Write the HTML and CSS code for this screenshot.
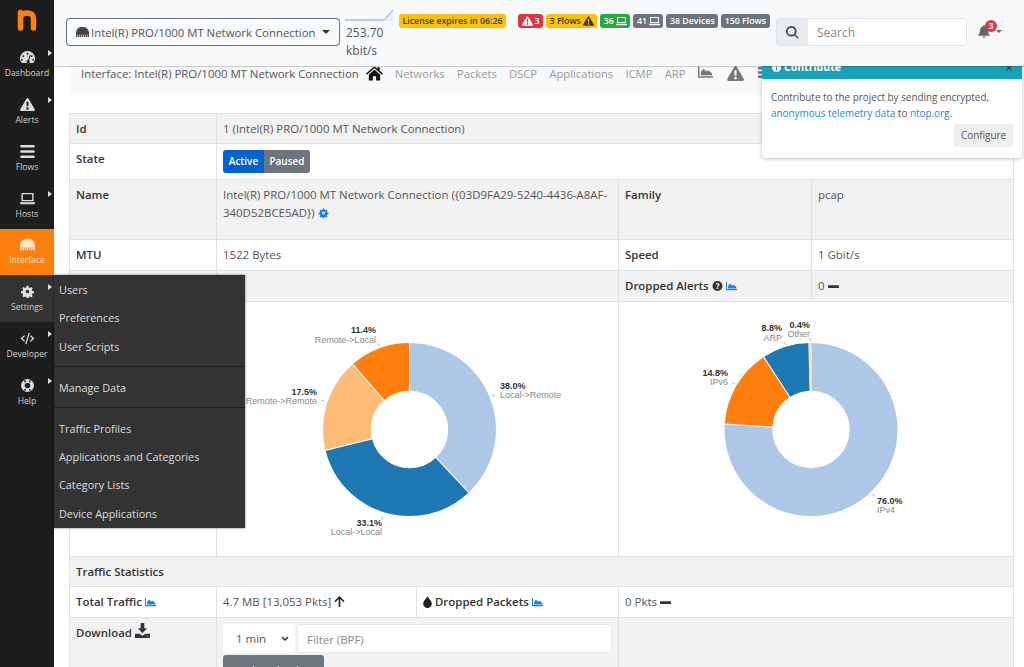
FILE: index.html
```html
<!DOCTYPE html>
<html lang="en">
<head>
<meta charset="utf-8">
<title>ntopng Interface</title>
<link rel="stylesheet" href="styles.css">
</head>
<body>
<svg class="defs" width="0" height="0" aria-hidden="true">
  <symbol id="i-eth" viewBox="0 0 16 12"><path d="M0 12V7a7 6.500 0 0 1 16 0v5h-1.700V9h-.8v3h-1.700V9h-.8v3H9.300V9h-.8v3H7.500V9h-.8v3H5V9h-.8v3H2.500V9h-.8v3z"/></symbol>
  <symbol id="i-gauge" viewBox="0 0 16 14"><path fill-rule="evenodd" d="M8 0a8 8 0 0 0-6.800 12.200q.4.800 1.300.8h11q.9 0 1.300-.8A8 8 0 0 0 8 0zM8 2a1 1 0 1 1 0 2 1 1 0 0 1 0-2zM3.500 4.500a1 1 0 1 1 0 2 1 1 0 0 1 0-2zM12.500 4.500a1 1 0 1 1 0 2 1 1 0 0 1 0-2zM2 8.500a1 1 0 1 1 0 2 1 1 0 0 1 0-2zM14 8.500a1 1 0 1 1 0 2 1 1 0 0 1 0-2zM10.500 4.300l.9.3-1.700 5.300a1.800 1.800 0 1 1-1-.3z"/></symbol>
  <symbol id="i-warn" viewBox="0 0 16 14"><path fill-rule="evenodd" d="M8 0q.7 0 1.100.7l6.700 11.500q.5 1.500-1.100 1.800H1.300Q-.3 13.700.2 12.200L6.900.7Q7.300 0 8 0zM6.900 4l.2 5h1.800l.2-5zM8 10a1.300 1.300 0 1 0 0 2.600A1.300 1.300 0 0 0 8 10z"/></symbol>
  <symbol id="i-bars" viewBox="0 0 14 13"><path d="M1 0h12a1 1 0 0 1 0 2.600H1A1 1 0 0 1 1 0zM1 5.200h12a1 1 0 0 1 0 2.600H1a1 1 0 0 1 0-2.600zM1 10.400h12a1 1 0 0 1 0 2.600H1a1 1 0 0 1 0-2.600z"/></symbol>
  <symbol id="i-laptop" viewBox="0 0 16 12"><path fill-rule="evenodd" d="M2.500 0h11A1 1 0 0 1 14.500 1v8h-13V1a1 1 0 0 1 1-1zM3 1.500V7.500h10v-6zM0 10h16v1a1 1 0 0 1-1 1H1a1 1 0 0 1-1-1z"/></symbol>
  <symbol id="i-cog" viewBox="0 0 14 14"><path fill-rule="evenodd" d="M5.800 0h2.400l.4 2 1.400.6 1.700-1.100 1.700 1.700-1.100 1.700.6 1.400 2 .4v2.400l-2 .4-.6 1.400 1.100 1.700-1.700 1.700-1.700-1.100-1.400.6-.4 2H5.800l-.4-2-1.400-.6-1.700 1.100L.6 12.600l1.100-1.700-.6-1.400-2-.4V6.700l2-.4.6-1.400L.6 3.200 2.300 1.500 4 2.600l1.400-.6zM7 4.800a2.200 2.200 0 1 0 0 4.400 2.200 2.200 0 0 0 0-4.400z" transform="translate(.8 .8) scale(.885)"/></symbol>
  <symbol id="i-code" viewBox="0 0 18 14"><path d="M10.200 0l1.500.4L7.800 14l-1.500-.4zM5 3l1.100 1.100L3 7l3.100 2.900L5 11 .6 7zM13 3l4.400 4L13 11l-1.100-1.100L15 7l-3.100-2.900z"/></symbol>
  <symbol id="i-ring" viewBox="0 0 14 14"><path fill-rule="evenodd" d="M7 0a7 7 0 1 0 0 14A7 7 0 0 0 7 0zM7 4a3 3 0 1 1 0 6 3 3 0 0 1 0-6zM3 1.900A6 6 0 0 1 5 1.400l.4 1.800a4 4 0 0 0-1.200.7zM11 1.900l-1.200 2a4 4 0 0 0-1.200-.7L9 1.400a6 6 0 0 1 2 .5zM3 12.100l1.200-2a4 4 0 0 0 1.200.7L5 12.600a6 6 0 0 1-2-.5zM11 12.100a6 6 0 0 1-2 .5l-.4-1.800a4 4 0 0 0 1.200-.7z"/></symbol>
  <symbol id="i-home" viewBox="0 0 18 15"><path d="M9 0l3 2.500V1h2.500v3.600L18 7.500l-1 1.200L9 2 1 8.700 0 7.500zM9 3.500l6 5V14a1 1 0 0 1-1 1h-3.300v-4.500H7.300V15H4a1 1 0 0 1-1-1V8.500z"/></symbol>
  <symbol id="i-area" viewBox="0 0 16 12"><path d="M0 0h1.500v10.500H16V12H0zM3 9.500V6l3-3.500 3 3 2-1.500 4 3.500v2z"/></symbol>
  <symbol id="i-list" viewBox="0 0 14 13"><path d="M0 0h14v3H0zM0 5h14v3H0zM0 10h14v3H0z"/></symbol>
  <symbol id="i-search" viewBox="0 0 14 14"><path fill-rule="evenodd" d="M5.700 0a5.700 5.700 0 0 1 4.500 9.200l3.500 3.500-1 1-3.500-3.500A5.700 5.700 0 1 1 5.700 0zM5.700 1.900a3.800 3.800 0 1 0 0 7.600 3.800 3.800 0 0 0 0-7.600z"/></symbol>
  <symbol id="i-bell" viewBox="0 0 12 14"><path d="M6 0a1 1 0 0 1 1 1v.6A4 4 0 0 1 10.200 5.500c0 3.500 1.800 4.700 1.800 5.500v.5H0V11c0-.8 1.800-2 1.800-5.500A4 4 0 0 1 5 1.600V1a1 1 0 0 1 1-1zM4.400 12.300h3.200a1.600 1.600 0 0 1-3.200 0z"/></symbol>
  <symbol id="i-info" viewBox="0 0 12 12"><path fill-rule="evenodd" d="M6 0a6 6 0 1 0 0 12A6 6 0 0 0 6 0zM6 2.300a1 1 0 1 1 0 2 1 1 0 0 1 0-2zM4.800 5h2v4h.6v1H4.700V9h.7V6h-.6z"/></symbol>
  <symbol id="i-help" viewBox="0 0 12 12"><path fill-rule="evenodd" d="M6 0a6 6 0 1 0 0 12A6 6 0 0 0 6 0zM6 2.300c1.500 0 2.500.9 2.500 2 0 1.600-1.700 1.600-1.700 2.600H5.200c0-1.800 1.600-1.800 1.600-2.600 0-.4-.3-.7-.8-.7-.5 0-.9.3-1.200.8l-1-.7C4.300 2.800 5 2.300 6 2.300zM5.100 7.700h1.800v1.800H5.100z"/></symbol>
  <symbol id="i-drop" viewBox="0 0 10 14"><path d="M5 0c.8 3 5 5 5 9a5 5 0 0 1-10 0c0-4 4.200-6 5-9z"/></symbol>
  <symbol id="i-up" viewBox="0 0 12 12"><path d="M6 0l5.500 5.500-1.200 1.200L6.900 3.300V12H5.100V3.300L1.700 6.700.5 5.500z"/></symbol>
  <symbol id="i-minus" viewBox="0 0 12 3"><rect width="12" height="3" rx=".6"/></symbol>
  <symbol id="i-dl" viewBox="0 0 14 14"><path fill-rule="evenodd" d="M5.300 0h3.400v5h2.600L7 9.500 2.700 5h2.600zM0 10h4.300L7 12l2.700-2H14v4H0zM11.500 11.600a.5.500 0 1 0 0 1 .5.500 0 0 0 0-1z"/></symbol>
</svg>

<div class="app">
  <aside class="sidebar">
    <div class="logo"><svg class="logo-mark" viewBox="0 0 54 41" aria-label="ntopng"><path d="M20.500 12.500V28M20.500 17Q22.500 13 27 13Q33.500 13 33.500 19V28"/></svg></div>
    <nav class="side-nav">
      <a class="side-item has-sub"><svg class="si"><use href="#i-gauge"/></svg><span>Dashboard</span></a>
      <a class="side-item has-sub"><svg class="si"><use href="#i-warn"/></svg><span>Alerts</span></a>
      <a class="side-item"><svg class="si"><use href="#i-bars"/></svg><span>Flows</span></a>
      <a class="side-item has-sub"><svg class="si"><use href="#i-laptop"/></svg><span>Hosts</span></a>
      <a class="side-item is-active"><svg class="si"><use href="#i-eth"/></svg><span>Interface</span></a>
      <a class="side-item has-sub is-open"><svg class="si"><use href="#i-cog"/></svg><span>Settings</span></a>
      <a class="side-item has-sub"><svg class="si"><use href="#i-code"/></svg><span>Developer</span></a>
      <a class="side-item has-sub"><svg class="si"><use href="#i-ring"/></svg><span>Help</span></a>
    </nav>
  </aside>

  <div class="column">
    <header class="navbar">
      <button class="iface-select"><svg class="ic-eth"><use href="#i-eth"/></svg><span>Intel(R) PRO/1000 MT Network Connection</span><i class="caret"></i></button>
      <div class="rate">
        <svg class="spark" viewBox="0 0 48 12"><path class="spark-fill" d="M0 11h39l9-10v11H0z"/><path class="spark-line" d="M0 11h39l9-10"/></svg>
        <div class="rate-text">253.70 kbit/s</div>
      </div>
      <div class="badges">
        <span class="badge b-yellow b-license">License expires in 06:26</span>
        <span class="badge b-red"><svg class="bi"><use href="#i-warn"/></svg>3</span>
        <span class="badge b-yellow">3 Flows<svg class="bi"><use href="#i-warn"/></svg></span>
        <span class="badge b-green">36<svg class="bi"><use href="#i-laptop"/></svg></span>
        <span class="badge b-grey">41<svg class="bi"><use href="#i-laptop"/></svg></span>
        <span class="badge b-grey">38 Devices</span>
        <span class="badge b-grey">150 Flows</span>
      </div>
      <div class="search">
        <span class="search-addon"><svg class="ic-search"><use href="#i-search"/></svg></span>
        <span class="search-field">Search</span>
      </div>
      <div class="bell">
        <svg class="ic-bell"><use href="#i-bell"/></svg>
        <span class="bell-count">3</span>
        <i class="caret caret-small"></i>
      </div>
    </header>

    <main class="content">
      <div class="subnav">
        <span class="sub-title">Interface: Intel(R) PRO/1000 MT Network Connection</span>
        <svg class="ic-home"><use href="#i-home"/></svg>
        <a>Networks</a><a>Packets</a><a>DSCP</a><a>Applications</a><a>ICMP</a><a>ARP</a>
        <svg class="ic-area"><use href="#i-area"/></svg>
        <svg class="ic-warn"><use href="#i-warn"/></svg>
        <svg class="ic-list"><use href="#i-list"/></svg>
      </div>

      <table class="info">
        <colgroup><col class="c1"><col class="c2"><col class="c3"><col class="c4"><col class="c5"></colgroup>
        <tbody>
          <tr class="r-id odd"><th>Id</th><td colspan="4">1 (Intel(R) PRO/1000 MT Network Connection)</td></tr>
          <tr class="r-state"><th>State</th><td colspan="4"><span class="toggle"><span class="t-on">Active</span><span class="t-off">Paused</span></span></td></tr>
          <tr class="r-name odd"><th>Name</th><td colspan="2">Intel(R) PRO/1000 MT Network Connection ({03D9FA29-5240-4436-A8AF-340D52BCE5AD}) <svg class="ic-inline blue"><use href="#i-cog"/></svg></td><th>Family</th><td>pcap</td></tr>
          <tr class="r-row"><th>MTU</th><td colspan="2">1522 Bytes</td><th>Speed</th><td>1 Gbit/s</td></tr>
          <tr class="r-row odd"><th></th><td colspan="2"></td><th>Dropped Alerts <svg class="ic-inline dark"><use href="#i-help"/></svg> <svg class="ic-inline blue"><use href="#i-area"/></svg></th><td>0 <svg class="ic-minus"><use href="#i-minus"/></svg></td></tr>
          <tr class="r-chart">
            <th></th>
            <td colspan="2" class="chart-cell">
              <svg class="pie" viewBox="217 301 401 254">
                <g transform="translate(409.500 428.500) rotate(-90)" fill="none" stroke-width="47.800">
                  <circle r="62.600" pathLength="100" stroke="#aec7e8" stroke-dasharray="38 62"/>
                  <circle r="62.600" pathLength="100" stroke="#1f77b4" stroke-dasharray="33.100 66.900" stroke-dashoffset="-38"/>
                  <circle r="62.600" pathLength="100" stroke="#ffbb78" stroke-dasharray="17.500 82.500" stroke-dashoffset="-71.100"/>
                  <circle r="62.600" pathLength="100" stroke="#ff7f0e" stroke-dasharray="11.400 88.600" stroke-dashoffset="-88.600"/>
                </g>
                <g transform="translate(409.500 428.500)" class="seps">
                  <line y1="-38" y2="-87"/>
                  <line y1="-38" y2="-87" transform="rotate(136.800)"/>
                  <line y1="-38" y2="-87" transform="rotate(255.960)"/>
                  <line y1="-38" y2="-87" transform="rotate(318.960)"/>
                </g>
                <path class="lead" d="M492 395l3-1M379 345l-1-3M324 400l-3-1M383 516l-1 3"/>
                <text class="pct" x="376" y="332" text-anchor="end">11.4%</text>
                <text class="lbl" x="376" y="342" text-anchor="end">Remote-&gt;Local</text>
                <text class="pct" x="500" y="388">38.0%</text>
                <text class="lbl" x="500" y="397">Local-&gt;Remote</text>
                <text class="pct" x="317" y="394" text-anchor="end">17.5%</text>
                <text class="lbl" x="317" y="403" text-anchor="end">Remote-&gt;Remote</text>
                <text class="pct" x="382" y="525" text-anchor="end">33.1%</text>
                <text class="lbl" x="382" y="534" text-anchor="end">Local-&gt;Local</text>
              </svg>
            </td>
            <td colspan="2" class="chart-cell">
              <svg class="pie" viewBox="619 301 394 254">
                <g transform="translate(811 428.500) rotate(-90)" fill="none" stroke-width="47.800">
                  <circle r="62.600" pathLength="100" stroke="#aec7e8" stroke-dasharray="76 24"/>
                  <circle r="62.600" pathLength="100" stroke="#ff7f0e" stroke-dasharray="14.800 85.200" stroke-dashoffset="-76"/>
                  <circle r="62.600" pathLength="100" stroke="#1f77b4" stroke-dasharray="8.800 91.200" stroke-dashoffset="-90.800"/>
                  <circle r="62.600" pathLength="100" stroke="#ffbb78" stroke-dasharray="0.400 99.600" stroke-dashoffset="-99.600"/>
                </g>
                <g transform="translate(811 428.500)" class="seps">
                  <line y1="-38" y2="-87"/>
                  <line y1="-38" y2="-87" transform="rotate(273.600)"/>
                  <line y1="-38" y2="-87" transform="rotate(326.880)"/>
                  <line y1="-38" y2="-87" transform="rotate(358.560)"/>
                </g>
                <path class="lead" d="M872 493l3 2M735 383l-3-2M786 344l-2-3M810 340l0-3"/>
                <text class="pct" x="877" y="503">76.0%</text>
                <text class="lbl" x="877" y="512">IPv4</text>
                <text class="pct" x="728" y="375" text-anchor="end">14.8%</text>
                <text class="lbl" x="728" y="384" text-anchor="end">IPv6</text>
                <text class="pct" x="782" y="330" text-anchor="end">8.8%</text>
                <text class="lbl" x="782" y="340" text-anchor="end">ARP</text>
                <text class="pct" x="810" y="327" text-anchor="end">0.4%</text>
                <text class="lbl" x="810" y="336" text-anchor="end">Other</text>
              </svg>
            </td>
          </tr>
          <tr class="r-id odd"><th colspan="5">Traffic Statistics</th></tr>
          <tr class="r-row"><th>Total Traffic <svg class="ic-inline blue"><use href="#i-area"/></svg></th><td>4.7 MB [13,053 Pkts] <svg class="ic-up"><use href="#i-up"/></svg></td><th><svg class="ic-drop"><use href="#i-drop"/></svg> Dropped Packets <svg class="ic-inline blue"><use href="#i-area"/></svg></th><td colspan="2">0 Pkts <svg class="ic-minus"><use href="#i-minus"/></svg></td></tr>
          <tr class="r-dl odd">
            <th>Download <svg class="ic-dl"><use href="#i-dl"/></svg></th>
            <td colspan="2">
              <div class="dl-form">
                <span class="dl-select">1 min<svg class="chev" viewBox="0 0 8 5"><path d="M1 1l3 3 3-3"/></svg></span>
                <span class="dl-filter">Filter (BPF)</span>
              </div>
              <button class="dl-btn">download</button>
            </td>
            <td colspan="2"></td>
          </tr>
        </tbody>
      </table>
    </main>
  </div>
</div>

<div class="menu">
  <a>Users</a><a>Preferences</a><a>User Scripts</a>
  <hr>
  <a>Manage Data</a>
  <hr class="hr-tight">
  <a>Traffic Profiles</a><a>Applications and Categories</a><a>Category Lists</a><a>Device Applications</a>
</div>

<div class="toast">
  <div class="toast-head"><svg class="ic-info"><use href="#i-info"/></svg><b>Contribute</b><span class="toast-x">×</span></div>
  <div class="toast-body">
    <p>Contribute to the project by sending encrypted, <a>anonymous telemetry data</a> to <a>ntop.org</a>.</p>
    <span class="toast-btn">Configure</span>
  </div>
</div>
</body>
</html>
```
FILE: styles.css
```css
* { box-sizing: border-box; }
html, body { margin: 0; height: 100%; overflow: hidden; }
body { font-family: "Open Sans", "Liberation Sans", sans-serif; font-size: 11px; color: #555; background: #fff; }
svg { fill: currentColor; }
.defs { position: absolute; }
.app { display: flex; height: 667px; }

/* Sidebar */
.sidebar { width: 54px; flex: none; background: #1d1d1d; color: #ddd; }
.logo { height: 41px; }
.logo-mark { display: block; width: 54px; height: 41px; fill: none; stroke: #ff7f0e; stroke-width: 5.500; stroke-linecap: round; }
.side-nav { display: flex; flex-direction: column; }
.side-item { position: relative; height: 46.900px; display: flex; flex-direction: column; align-items: center; justify-content: flex-end; padding-bottom: 9px; gap: 3px; font-size: 8.600px; line-height: 12px; color: #cfcfcf; }
.side-item .si { width: 15px; height: 13px; color: #ddd; }
.has-sub::after { content: ""; position: absolute; top: 9px; right: 2px; border-left: 4px solid #ddd; border-top: 3px solid transparent; border-bottom: 3px solid transparent; }
.is-active { background: #ff7f0e; color: #ffe3c6; }
.is-active .si { color: #ffe3c6; }
.is-open { background: #333; }

/* Navbar */
.column { flex: 1; min-width: 0; display: flex; flex-direction: column; }
.navbar { position: relative; z-index: 2; height: 66px; flex: none; display: flex; align-items: flex-start; background: #f8f9fa; box-shadow: 0 1px 1px rgba(0,0,0,.18); padding: 0 0 0 12px; }
.iface-select { width: 274px; height: 28px; margin-top: 18px; flex: none; display: flex; align-items: center; padding: 0 9px; gap: 2px; background: #f8f9fa; border: 1px solid #6c757d; border-radius: 4px; font: 11.400px "Open Sans", sans-serif; color: #555; white-space: nowrap; box-shadow: 0 0 1px rgba(0,0,0,.3); }
.ic-eth { width: 13px; height: 10px; color: #444; flex: none; }
.caret { display: block; width: 0; margin-left: auto; border-top: 4px solid #333; border-left: 4px solid transparent; border-right: 4px solid transparent; }
.rate { width: 54px; margin-left: 5px; padding-top: 9px; flex: none; }
.spark { display: block; width: 48px; height: 12px; }
.spark-fill { fill: #e6eefb; }
.spark-line { fill: none; stroke: #7aa6e8; stroke-width: 1; }
.rate-text { width: 44px; font-size: 12px; line-height: 18px; margin-top: 3px; padding-left: 1px; }
.badges { display: flex; gap: 3px; margin-top: 14px; align-items: center; flex: none; }
.badge { height: 14px; display: inline-flex; align-items: center; justify-content: center; gap: 2px; padding: 0 3.500px; border-radius: 3px; font-size: 8.800px; font-weight: 600; line-height: 14px; color: #fff; white-space: nowrap; }
.bi { width: 11px; height: 10px; flex: none; }
.b-license { margin-right: 9px; }
.b-yellow { background: #ffc107; color: #343a40; }
.b-red { background: #dc3545; }
.b-green { background: #28a745; }
.b-grey { background: #6c757d; }
.search { width: 191px; height: 28px; margin: 18px 0 0 auto; display: flex; border: 1px solid #dee2e6; border-radius: 4px; background: #fff; flex: none; }
.search-addon { width: 31px; background: #e9ecef; display: flex; align-items: center; justify-content: center; }
.ic-search { width: 13px; height: 13px; color: #444; }
.search-field { padding-left: 9px; font-size: 12px; line-height: 28px; color: #888; }
.bell { position: relative; width: 57px; flex: none; }
.ic-bell { position: absolute; left: 11px; top: 25px; width: 12px; height: 13px; color: #666; }
.bell-count { position: absolute; left: 18px; top: 20px; width: 12px; height: 12px; border-radius: 50%; background: #dc3545; color: #fff; font-size: 9px; font-weight: 700; line-height: 12px; text-align: center; }
.caret-small { position: absolute; left: 29px; top: 30px; margin: 0; border-top-width: 3px; border-left-width: 3px; border-right-width: 3px; border-top-color: #666; }

/* Content */
.content { padding: 0 11px 0 16px; }
.subnav { height: 29px; display: flex; align-items: flex-start; background: #f8f9fa; padding: 0 0 0 11px; font-size: 11.400px; line-height: 16px; }
.sub-title { margin-right: 7px; }
.subnav a { color: #999; margin-right: 12.300px; font-size: 11.200px; }
.ic-home { width: 17px; height: 15px; color: #111; margin-right: 12px; }
.ic-area { width: 15px; height: 12px; color: #777; margin: 0 14px 0 0; }
.ic-warn { width: 17px; height: 15px; color: #777; margin-right: 14px; }
.ic-list { width: 12px; height: 13px; color: #777; }
.info { width: 944px; margin: 18px 0 0 -1px; border-collapse: collapse; table-layout: fixed; }
.c1 { width: 147px; } .c2 { width: 200px; } .c3 { width: 202px; } .c4 { width: 193px; } .c5 { width: 202px; }
.info th, .info td { border: 1px solid #dee2e6; padding: 6px 6px 5px; text-align: left; vertical-align: top; font-size: 11.450px; line-height: 18px; }
.info th { color: #333; font-weight: 600; }
.info .r-dl th { padding-top: 5px; }
.odd { background: #f2f2f2; }
.r-id { height: 30px; }
.r-state { height: 36px; }
.r-name { height: 60px; }
.r-row { height: 31px; }
.r-chart { height: 255px; }
.r-dl { height: 60px; }
.info .chart-cell { padding: 0; }
.pie { display: block; width: 100%; height: 254px; }
.seps line { stroke: #fff; stroke-width: 1; }
.lead { fill: none; stroke: #bbb; stroke-width: 1; }
.pct { font-family: "Liberation Sans", sans-serif; font-size: 9px; font-weight: 700; fill: #333; }
.lbl { font-family: "Liberation Sans", sans-serif; font-size: 9px; fill: #888; }
.toggle { display: inline-flex; height: 23px; border-radius: 3px; overflow: hidden; font-weight: 600; font-size: 10px; line-height: 23px; color: #fff; text-align: center; }
.t-on { background: #0062cc; width: 41px; }
.t-off { background: #6c757d; width: 46px; }
.ic-inline { display: inline-block; vertical-align: -1px; width: 11px; height: 10px; }
.blue { color: #1e7ff0; }
.dark { color: #333; }
.ic-minus { display: inline-block; vertical-align: 2px; width: 11px; height: 3px; color: #333; }
.ic-up { display: inline-block; vertical-align: -1px; width: 11px; height: 11px; color: #222; }
.ic-drop { display: inline-block; vertical-align: -2px; width: 9px; height: 12px; color: #222; }
.ic-dl { display: inline-block; vertical-align: -1px; width: 15px; height: 15px; color: #333; }
.dl-form { display: flex; gap: 2px; width: 389px; }
.dl-select { position: relative; width: 72px; height: 29px; display: block; padding-left: 13px; font-size: 11.500px; line-height: 29px; background: #fff; border-radius: 3px; }
.chev { position: absolute; right: 6px; top: 12px; width: 8px; height: 5px; fill: none; stroke: #333; stroke-width: 1.500; }
.dl-filter { flex: 1; height: 29px; padding-left: 9px; line-height: 29px; color: #888; background: #fff; border: 1px solid #e6e8ea; border-radius: 3px; }
.dl-btn { display: block; width: 101px; height: 28px; margin-top: 2px; border: 0; border-radius: 3px; padding: 0; background: #6c757d; color: #fff; font: 11px "Open Sans", sans-serif; }

/* Dropdown menu over the sidebar */
.menu { position: absolute; left: 54px; top: 275px; width: 191px; height: 253px; z-index: 3; padding-top: 1px; background: #333; color: #ddd; box-shadow: 0 0 2px rgba(0,0,0,.6); }
.menu a { display: block; height: 28.400px; padding-left: 5px; font-size: 10.850px; line-height: 28px; }
.menu hr { margin: 5px 0 7px; border: 0; border-top: 1px solid #202020; }
.menu .hr-tight { margin: 4.500px 0 6.500px; }

/* Contribute toast */
.toast { position: absolute; z-index: 1; left: 762px; top: 55px; width: 260px; height: 103px; background: #fff; border-radius: 4px; box-shadow: 0 1px 4px rgba(0,0,0,.25); }
.toast-head { height: 24px; display: flex; align-items: center; gap: 3px; padding: 0 9px 0 10px; background: #17a2b8; color: #fff; font-size: 10.500px; border-radius: 4px 4px 0 0; }
.ic-info { width: 9px; height: 9px; }
.toast-x { margin-left: auto; color: #333; font-size: 14px; }
.toast-body { padding: 10px 9px 0; font-size: 9.900px; line-height: 16px; }
.toast-body p { margin: 0; }
.toast-body a { color: #1e7ff0; }
.toast-btn { display: block; width: 59px; height: 23px; margin: 3px 0 0 auto; background: #eee; border-radius: 3px; text-align: center; line-height: 23px; }
```
